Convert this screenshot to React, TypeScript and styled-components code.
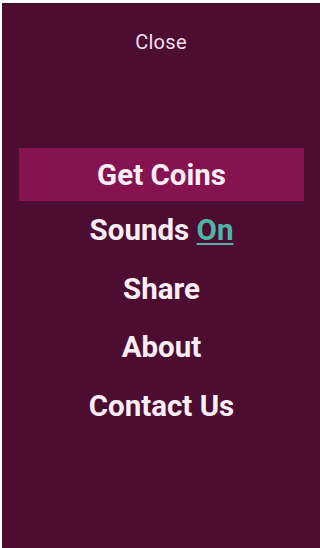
import React from "react";
import styled, { createGlobalStyle } from "styled-components";

const GlobalStyle = createGlobalStyle`
    html, body {
        margin: 0;
        padding: 0;
        background: #ffffff;
    }
    body {
        font-family: Roboto, "Liberation Sans", sans-serif;
    }
`;

const menuItems = [
    { id: "coins", label: "Get Coins", active: true },
    { id: "sounds", label: "Sounds", toggle: "On" },
    { id: "share", label: "Share" },
    { id: "about", label: "About" },
    { id: "contact", label: "Contact Us" },
];

export default function App() {
    return (
        <>
            <GlobalStyle />
            <Panel>
                <CloseButton>Close</CloseButton>
                <Menu>
                    {menuItems.map((item) => (
                        <MenuItem key={item.id} $active={item.active}>
                            {item.label}
                            {item.toggle && (
                                <>
                                    {" "}
                                    <Toggle>{item.toggle}</Toggle>
                                </>
                            )}
                        </MenuItem>
                    ))}
                </Menu>
            </Panel>
        </>
    );
}

const Panel = styled.div`
    box-sizing: border-box;
    margin: 3px 0 0 2px;
    height: 545px;
    background-color: #4d0d30;
    display: flex;
    flex-direction: column;
`;

const CloseButton = styled.div`
    height: 36px;
    margin-top: 21px;
    display: flex;
    align-items: center;
    justify-content: center;
    font-size: 20px;
    letter-spacing: 0.3px;
    color: #f4dff0;
`;

const Menu = styled.ul`
    list-style: none;
    margin: 88px 0 0;
    padding: 0;
    display: flex;
    flex-direction: column;
`;

const MenuItem = styled.li<{ $active?: boolean }>`
    height: ${(p) => (p.$active ? "53px" : "58.5px")};
    margin: 0 16px 0 17px;
    display: flex;
    align-items: center;
    justify-content: center;
    font-size: 29.5px;
    font-weight: 700;
    color: #fbeef6;
    white-space: pre;
    background-color: ${(p) => (p.$active ? "#85134f" : "transparent")};
`;

const Toggle = styled.span`
    color: #4db6a8;
    text-decoration: underline;
    text-decoration-thickness: 2px;
    text-underline-offset: 3px;
`;
